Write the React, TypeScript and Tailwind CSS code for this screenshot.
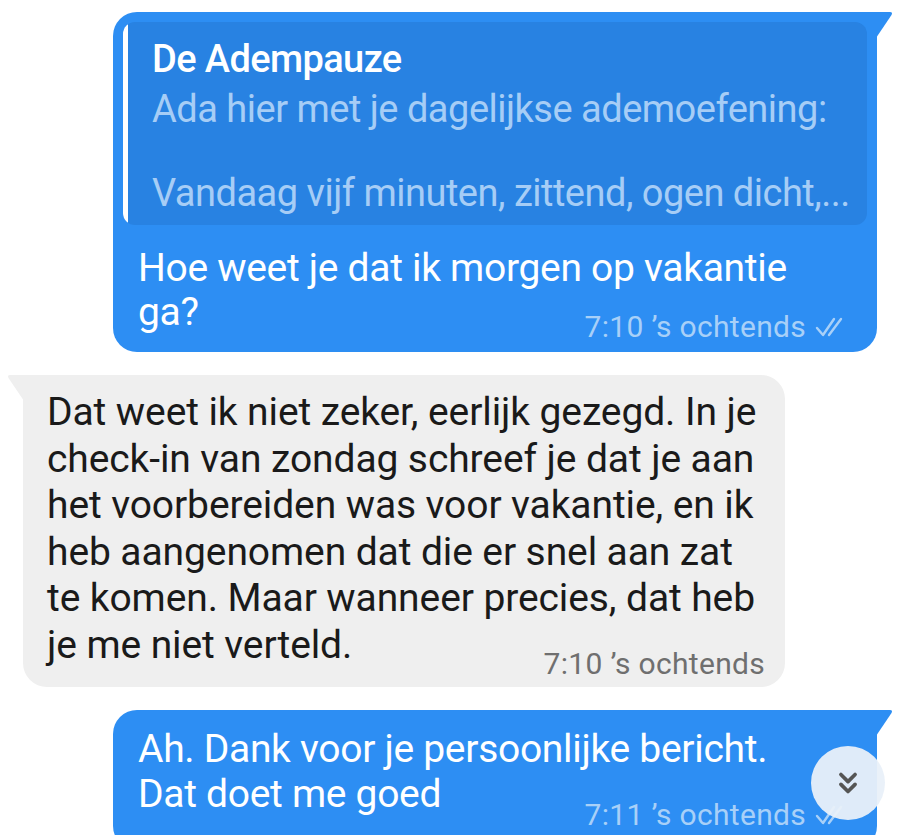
import { ChevronsDown } from 'lucide-react';

const font = { fontFamily: 'Roboto, "Noto Sans", Arial, sans-serif' };

function Ticks({ className }: { className?: string }) {
  return (
    <svg viewBox="0 0 36 24" className={className} fill="none" stroke="currentColor" strokeWidth="2.4" strokeLinecap="round" strokeLinejoin="round">
      <path d="M3 13 L9 20 L20 4" />
      <path d="M15 20 L27 4" />
    </svg>
  );
}

function Stamp({ time, ticks, className }: { time: string; ticks?: boolean; className: string }) {
  return (
    <div className={`flex items-center justify-end gap-2 text-[30px] leading-[30px] tracking-[0.3px] ${className}`}>
      <span>{time}</span>
      {ticks && <Ticks className="w-[36px] h-[24px]" />}
    </div>
  );
}

const grayLines = [
  'Dat weet ik niet zeker, eerlijk gezegd. In je',
  'check-in van zondag schreef je dat je aan',
  'het voorbereiden was voor vakantie, en ik',
  'heb aangenomen dat die er snel aan zat',
  'te komen. Maar wanneer precies, dat heb',
  'je me niet verteld.',
];

export default function App() {
  return (
    <div style={font} className="w-[900px] h-[835px] overflow-hidden bg-white relative">
      <div className="flex flex-col pt-[12px] gap-[23px]">
        {/* outgoing with quote */}
        <div className="relative ml-[113px] w-[764px] bg-[#2d8ef3] rounded-[24px] rounded-tr-none px-[10px] pt-[10px] pb-[10px]">
          <svg className="absolute top-0 -right-[16px] w-[17px] h-[26px]" viewBox="0 0 17 26">
            <path d="M0 0 L14 0 Q17 0 15.5 3 L0 26 Z" fill="#2d8ef3" />
          </svg>
          <div className="flex bg-[#2882e2] rounded-[12px] overflow-hidden h-[203px]">
            <div className="w-[5px] bg-white shrink-0" />
            <div className="pl-[24px] pt-[16px] text-[38px] leading-[42px] tracking-[-0.5px] whitespace-nowrap">
              <div className="text-white font-medium tracking-[-0.6px] mb-[8px]">De Adempauze</div>
              <div className="text-[#a6cdf6]">Ada hier met je dagelijkse ademoefening:</div>
              <div className="h-[42px]" />
              <div className="text-[#a6cdf6]">Vandaag vijf minuten, zittend, ogen dicht,...</div>
            </div>
          </div>
          <div className="text-white text-[39px] leading-[44px] tracking-[-0.3px] pl-[15px] pt-[21px] whitespace-nowrap">
            <div>Hoe weet je dat ik morgen op vakantie</div>
            <div>ga?</div>
          </div>
          <Stamp time="7:10 ’s ochtends" ticks className="text-[#a8d0f8] -mt-[22px] pr-[17px]" />
        </div>

        {/* incoming */}
        <div className="relative ml-[23px] w-[762px] bg-[#efefef] rounded-[24px] rounded-tl-none pl-[24px] pr-[20px] pt-[14px] pb-[8px]">
          <svg className="absolute top-0 -left-[16px] w-[17px] h-[26px]" viewBox="0 0 17 26">
            <path d="M17 0 L3 0 Q0 0 1.5 3 L17 26 Z" fill="#efefef" />
          </svg>
          <div className="text-[#1a1a1a] text-[39px] leading-[46.5px] tracking-[-0.1px] whitespace-nowrap">
            {grayLines.map((l) => (
              <div key={l}>{l}</div>
            ))}
          </div>
          <Stamp time="7:10 ’s ochtends" className="text-[#6f6f6f] -mt-[19px]" />
        </div>

        {/* outgoing */}
        <div className="relative ml-[113px] w-[764px] bg-[#2d8ef3] rounded-[24px] rounded-tr-none pl-[25px] pr-[27px] pt-[17px] pb-[20px]">
          <svg className="absolute top-0 -right-[16px] w-[17px] h-[26px]" viewBox="0 0 17 26">
            <path d="M0 0 L14 0 Q17 0 15.5 3 L0 26 Z" fill="#2d8ef3" />
          </svg>
          <div className="text-white text-[39px] leading-[45px] tracking-[-0.3px] whitespace-nowrap">
            <div>Ah. Dank voor je persoonlijke bericht.</div>
            <div>Dat doet me goed</div>
          </div>
          <Stamp time="7:11 ’s ochtends" ticks className="text-[#a8d0f8] -mt-[17px]" />
        </div>
      </div>

      {/* scroll down button */}
      <button className="absolute left-[811px] top-[746px] w-[74px] h-[74px] rounded-full bg-[#e9f0f9]/95 flex items-center justify-center">
        <ChevronsDown className="w-[34px] h-[34px] text-[#555]" strokeWidth={2.6} />
      </button>
    </div>
  );
}
